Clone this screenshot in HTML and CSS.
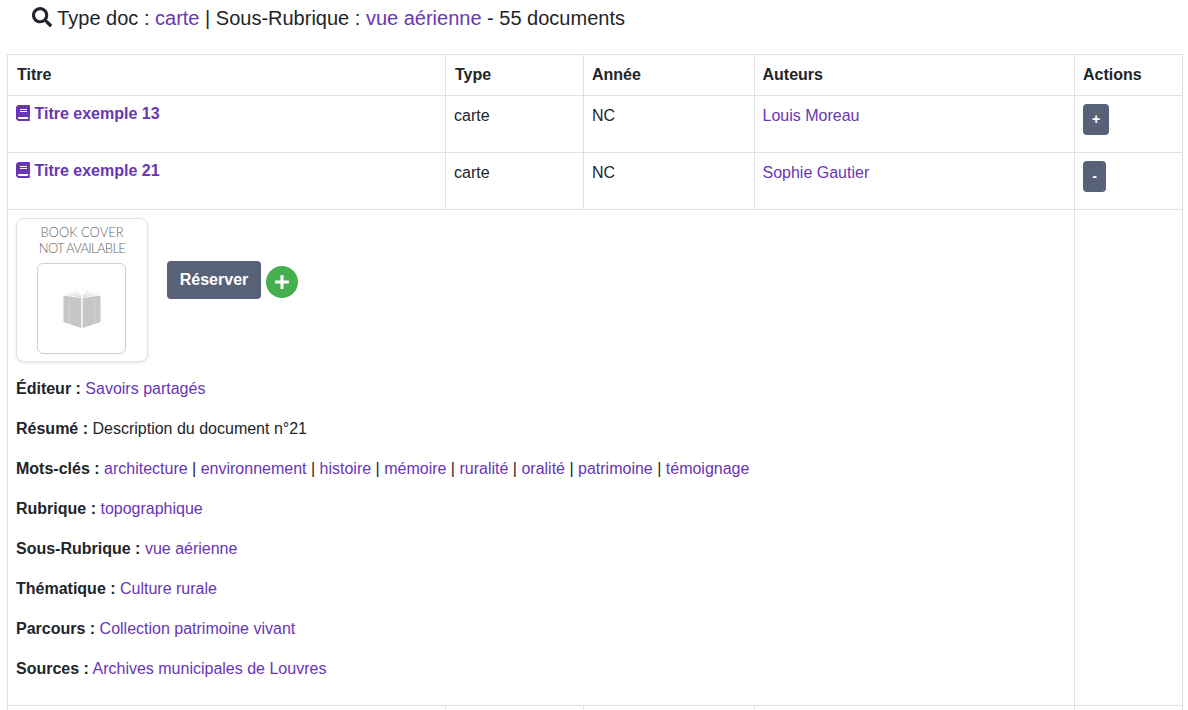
FILE: index.html
```html
<!DOCTYPE html>
<html lang="fr">
<head>
<meta charset="utf-8">
<title>Documents</title>
<link rel="stylesheet" href="styles.css">
</head>
<body>
<h1 class="heading">
  <svg class="icon-search" viewBox="0 0 512 512"><path d="M505 442.7L405.3 343c-4.5-4.5-10.6-7-17-7H372c27.6-35.3 44-79.7 44-128C416 93.1 322.9 0 208 0S0 93.1 0 208s93.1 208 208 208c48.3 0 92.7-16.4 128-44v16.3c0 6.4 2.5 12.5 7 17l99.7 99.7c9.4 9.4 24.6 9.4 33.9 0l28.3-28.3c9.4-9.4 9.4-24.6.1-34zM208 336c-70.7 0-128-57.2-128-128 0-70.7 57.2-128 128-128 70.7 0 128 57.2 128 128 0 70.7-57.2 128-128 128z"/></svg>
  Type doc : <a href="#">carte</a> | Sous-Rubrique : <a href="#">vue aérienne</a> - 55 documents
</h1>
<table class="docs">
  <colgroup>
    <col class="c-title"><col class="c-type"><col class="c-year"><col class="c-author"><col class="c-actions">
  </colgroup>
  <thead>
    <tr><th>Titre</th><th>Type</th><th>Année</th><th class="th-author">Auteurs</th><th>Actions</th></tr>
  </thead>
  <tbody>
    <tr class="row">
      <td><a class="doc-title" href="#"><svg class="icon-book" viewBox="0 0 448 512"><path d="M448 360V24c0-13.3-10.7-24-24-24H96C43 0 0 43 0 96v320c0 53 43 96 96 96h328c13.3 0 24-10.7 24-24v-16c0-7.5-3.5-14.3-8.9-18.7-4.2-15.4-4.2-59.3 0-74.7 5.4-4.3 8.9-11.1 8.9-18.6zM128 134c0-3.3 2.7-6 6-6h212c3.3 0 6 2.7 6 6v20c0 3.3-2.7 6-6 6H134c-3.3 0-6-2.7-6-6v-20zm0 64c0-3.3 2.7-6 6-6h212c3.3 0 6 2.7 6 6v20c0 3.3-2.7 6-6 6H134c-3.3 0-6-2.7-6-6v-20zm253.4 250H96c-17.7 0-32-14.3-32-32 0-17.6 14.4-32 32-32h285.4c-1.9 17.1-1.9 46.9 0 64z"/></svg> Titre exemple 13</a></td>
      <td>carte</td>
      <td>NC</td>
      <td class="td-author"><a href="#">Louis Moreau</a></td>
      <td><button class="btn-small btn-plus">+</button></td>
    </tr>
    <tr class="row">
      <td><a class="doc-title" href="#"><svg class="icon-book" viewBox="0 0 448 512"><path d="M448 360V24c0-13.3-10.7-24-24-24H96C43 0 0 43 0 96v320c0 53 43 96 96 96h328c13.3 0 24-10.7 24-24v-16c0-7.5-3.5-14.3-8.9-18.7-4.2-15.4-4.2-59.3 0-74.7 5.4-4.3 8.9-11.1 8.9-18.6zM128 134c0-3.3 2.7-6 6-6h212c3.3 0 6 2.7 6 6v20c0 3.3-2.7 6-6 6H134c-3.3 0-6-2.7-6-6v-20zm0 64c0-3.3 2.7-6 6-6h212c3.3 0 6 2.7 6 6v20c0 3.3-2.7 6-6 6H134c-3.3 0-6-2.7-6-6v-20zm253.4 250H96c-17.7 0-32-14.3-32-32 0-17.6 14.4-32 32-32h285.4c-1.9 17.1-1.9 46.9 0 64z"/></svg> Titre exemple 21</a></td>
      <td>carte</td>
      <td>NC</td>
      <td class="td-author"><a href="#">Sophie Gautier</a></td>
      <td><button class="btn-small btn-minus">-</button></td>
    </tr>
    <tr class="detail">
      <td colspan="4">
        <div class="top">
          <div class="cover">
            <div class="cover-text">BOOK COVER</div>
            <div class="cover-text cover-text-tight">NOT AVAILABLE</div>
            <div class="cover-box">
              <svg class="cover-book" viewBox="0 0 40 40">
                <path d="M19.3 9 V39 L1.5 33 V6.5 Z"/>
                <path d="M20.7 9 V39 L38.5 33 V6.5 Z"/>
                <path d="M5 5 L19 8 M9 3 L19 7.5 M13 1.5 L19.5 7 M35 5 L21 8 M31 3 L21 7.5 M27 1.5 L20.5 7" class="cover-pages"/>
                <path d="M7.5 9 V35 M32.5 9 V35" class="cover-folds"/>
              </svg>
            </div>
          </div>
          <button class="btn-reserve">Réserver</button>
          <span class="btn-add"><svg viewBox="0 0 16 16"><path d="M8 2.5v11M2.5 8h11"/></svg></span>
        </div>
        <p><b>Éditeur :</b> <a href="#">Savoirs partagés</a></p>
        <p><b>Résumé :</b> Description du document n°21</p>
        <p><b>Mots-clés :</b> <a href="#">architecture</a> | <a href="#">environnement</a> | <a href="#">histoire</a> | <a href="#">mémoire</a> | <a href="#">ruralité</a> | <a href="#">oralité</a> | <a href="#">patrimoine</a> | <a href="#">témoignage</a></p>
        <p><b>Rubrique :</b> <a href="#">topographique</a></p>
        <p><b>Sous-Rubrique :</b> <a href="#">vue aérienne</a></p>
        <p><b>Thématique :</b> <a href="#">Culture rurale</a></p>
        <p><b>Parcours :</b> <a href="#">Collection patrimoine vivant</a></p>
        <p><b>Sources :</b> <a href="#">Archives municipales de Louvres</a></p>
      </td>
      <td></td>
    </tr>
    <tr class="row-end">
      <td></td><td></td><td></td><td></td><td></td>
    </tr>
  </tbody>
</table>
</body>
</html>
```
FILE: styles.css
```css
html, body {
  margin: 0;
  height: 710px;
  overflow: hidden;
}
body {
  box-sizing: border-box;
  padding: 0 5px 0 7px;
  font-family: "Liberation Sans", Arial, sans-serif;
  font-size: 16px;
  line-height: 24px;
  color: #212529;
  background: #fff;
}
a {
  color: #6836b4;
  text-decoration: none;
}
.heading {
  margin: 0;
  padding: 6px 0 24px 25px;
  height: 24px;
  font-size: 20px;
  font-weight: 400;
  line-height: 24px;
}
.icon-search {
  width: 20px;
  height: 20px;
  vertical-align: -2px;
  fill: #212529;
}
.docs {
  width: 1175px;
  table-layout: fixed;
  border-collapse: collapse;
}
.c-title { width: 438px; }
.c-type { width: 138px; }
.c-year { width: 171px; }
.c-author { width: 320px; }
.c-actions { width: 108px; }
th, td {
  border: 1px solid #dee2e6;
  padding: 8px;
  vertical-align: top;
  text-align: left;
}
th { font-weight: 700; }
th:first-child { padding-left: 9px; }
th:nth-child(2) { padding-left: 9px; }
.th-author { padding-left: 7.5px; }
.td-author { padding-left: 7.5px; }
.row td {
  height: 40px;
}
.row-end td {
  height: 4px;
  padding: 0;
  border-bottom: 0;
}
.doc-title {
  display: block;
  margin-top: -2px;
  font-weight: 700;
}
.icon-book {
  width: 14px;
  height: 16px;
  vertical-align: -2px;
  fill: currentColor;
}
.btn-small {
  display: block;
  height: 31px;
  padding: 0;
  border: 0;
  border-radius: 4px;
  background: #576278;
  color: #fff;
  font: 700 14px/31px "Liberation Sans", Arial, sans-serif;
}
.btn-plus { width: 26px; }
.btn-minus { width: 23px; }
.top {
  display: flex;
  align-items: flex-start;
  margin-bottom: 15px;
}
.cover {
  box-sizing: border-box;
  width: 132px;
  height: 144px;
  padding-top: 5px;
  border: 1px solid #e2e2e2;
  border-radius: 8px;
  background: #fff;
  box-shadow: 0 1px 3px rgba(0, 0, 0, 0.1);
  text-align: center;
}
.cover-text {
  font-family: Lato, sans-serif;
  font-size: 13px;
  font-weight: 300;
  line-height: 16px;
  color: #666;
}
.cover-text-tight {
  letter-spacing: -0.65px;
}
.cover-box {
  box-sizing: border-box;
  display: flex;
  align-items: center;
  justify-content: center;
  width: 89px;
  height: 91px;
  margin: 7px 0 0 20px;
  border: 1px solid #cfcfcf;
  border-radius: 6px;
}
.cover-book {
  width: 40px;
  height: 40px;
  fill: #c6c6c6;
}
.cover-pages {
  fill: none;
  stroke: #c6c6c6;
  stroke-width: 0.6;
}
.cover-folds {
  fill: none;
  stroke: #e2e2e2;
  stroke-width: 0.5;
}
.btn-reserve {
  height: 38px;
  width: 94px;
  margin: 43px 5px 0 19px;
  padding: 0;
  border: 0;
  border-radius: 4px;
  background: #576278;
  color: #fff;
  font: 700 16px/36px "Liberation Sans", Arial, sans-serif;
}
.btn-add {
  display: flex;
  align-items: center;
  justify-content: center;
  width: 32px;
  height: 32px;
  margin-top: 48px;
  border-radius: 50%;
  background: #47ae50;
}
.btn-add svg {
  width: 20px;
  height: 20px;
  fill: none;
  stroke: #fff;
  stroke-width: 2.4;
}
p {
  margin: 0 0 16px;
}
```
